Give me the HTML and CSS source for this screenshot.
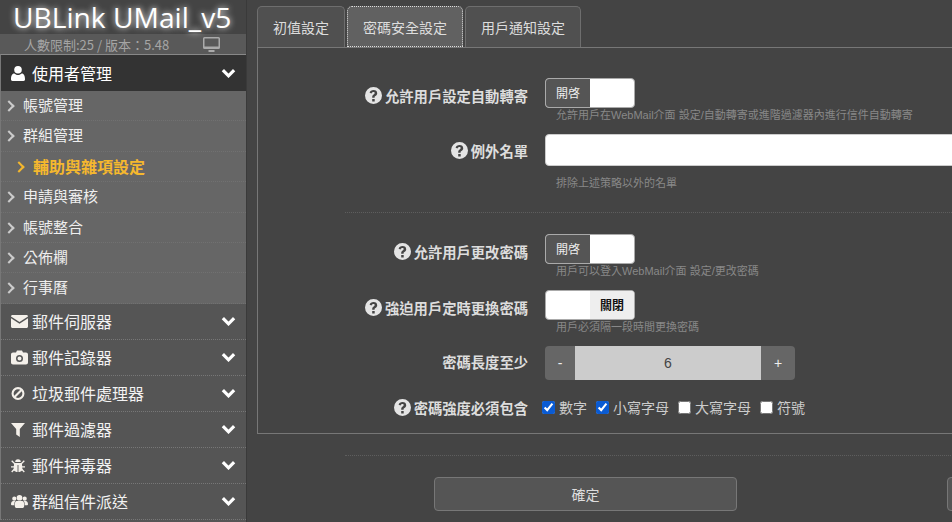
FILE: index.html
```html
<!DOCTYPE html>
<html lang="zh-Hant">
<head>
    <meta charset="UTF-8">
    <title>UBLink UMail_v5</title>
    <link rel="stylesheet" href="styles.css">
</head>
<body>
    <aside class="sidebar">
        <div class="brand">UBLink UMail_v5</div>
        <div class="license">
            <span>人數限制:25 / 版本：5.48</span>
            <svg class="monitor" viewBox="0 0 17 15"><path d="M1.5 0h14A1.5 1.5 0 0 1 17 1.5v9a1.5 1.5 0 0 1-1.5 1.500h-14A1.500 1.500 0 0 1 0 10.500v-9A1.500 1.500 0 0 1 1.500 0zM1.500 1.500v8h14v-8zM5.500 13h6v2h-6z" fill="#aaa" fill-rule="evenodd"/></svg>
        </div>
        <div class="menu">
            <div class="menu-head open">
                <svg class="menu-icon" viewBox="0 0 14 15"><circle cx="7" cy="3.800" r="3.800" fill="#fff"/><path d="M1.500 15C.500 15 0 14.400 0 13.300 0 10 1 7.500 3.300 7.500 4.300 8.400 5.500 9 7 9s2.700-.6 3.700-1.500C13 7.500 14 10 14 13.300c0 1.100-.5 1.700-1.500 1.700z" fill="#fff"/></svg>
                <span class="menu-text">使用者管理</span>
                <svg class="chev" viewBox="0 0 16 10"><path d="M2 2l6 6 6-6" fill="none" stroke="#fff" stroke-width="3.400"/></svg>
            </div>
            <ul class="submenu">
                <li><span class="arrow"></span>帳號管理</li>
                <li><span class="arrow"></span>群組管理</li>
                <li class="current"><span class="arrow"></span>輔助與雜項設定</li>
                <li><span class="arrow"></span>申請與審核</li>
                <li><span class="arrow"></span>帳號整合</li>
                <li><span class="arrow"></span>公佈欄</li>
                <li><span class="arrow"></span>行事曆</li>
            </ul>
            <div class="menu-head">
                <svg class="menu-icon wide" viewBox="0 0 17 13"><path d="M1.500 0h14c.8 0 1.500.6 1.500 1.400L8.500 7 0 1.400C0 .6.700 0 1.500 0zM0 3.200l8.500 5.600L17 3.200v8.300c0 .8-.7 1.500-1.500 1.500h-14C.7 13 0 12.300 0 11.500z" fill="#f4f0ea"/></svg>
                <span class="menu-text">郵件伺服器</span>
                <svg class="chev" viewBox="0 0 16 10"><path d="M2 2l6 6 6-6" fill="none" stroke="#fff" stroke-width="3.400"/></svg>
            </div>
            <div class="menu-head">
                <svg class="menu-icon wide" viewBox="0 0 17 14"><path d="M2 2h3l1-2h5l1 2h3c1.100 0 2 .9 2 2v8c0 1.100-.9 2-2 2H2c-1.100 0-2-.9-2-2V4c0-1.100.9-2 2-2zm6.500 2.500a3.500 3.500 0 1 0 0 7 3.500 3.500 0 0 0 0-7zm0 1.500a2 2 0 1 1 0 4 2 2 0 0 1 0-4z" fill="#f4f0ea" fill-rule="evenodd"/></svg>
                <span class="menu-text">郵件記錄器</span>
                <svg class="chev" viewBox="0 0 16 10"><path d="M2 2l6 6 6-6" fill="none" stroke="#fff" stroke-width="3.400"/></svg>
            </div>
            <div class="menu-head">
                <svg class="menu-icon" viewBox="0 0 16 16"><circle cx="8" cy="8" r="6.200" fill="none" stroke="#f4f0ea" stroke-width="2.400"/><path d="M4 12l8-8" stroke="#f4f0ea" stroke-width="2.400"/></svg>
                <span class="menu-text">垃圾郵件處理器</span>
                <svg class="chev" viewBox="0 0 16 10"><path d="M2 2l6 6 6-6" fill="none" stroke="#fff" stroke-width="3.400"/></svg>
            </div>
            <div class="menu-head">
                <svg class="menu-icon" viewBox="0 0 14 15"><path d="M0 1h14L8.800 7v8L5.200 12.500V7z" fill="#f4f0ea"/></svg>
                <span class="menu-text">郵件過濾器</span>
                <svg class="chev" viewBox="0 0 16 10"><path d="M2 2l6 6 6-6" fill="none" stroke="#fff" stroke-width="3.400"/></svg>
            </div>
            <div class="menu-head">
                <svg class="menu-icon" viewBox="0 0 16 16"><path d="M4.800 4a3.200 3.200 0 0 1 6.400 0zM3.500 5h9L13 13c-1 1.500-3 2.500-4.500 2.500v-8h-1v8C6 15.500 4 14.500 3 13z" fill="#f4f0ea"/><path d="M.8 2.500l3.500 3.500M15.200 2.500L11.700 6M0 9.500h4M16 9.500h-4M.8 15.500l3.200-3.500M15.200 15.500L12 12" stroke="#f4f0ea" stroke-width="1.500"/></svg>
                <span class="menu-text">郵件掃毒器</span>
                <svg class="chev" viewBox="0 0 16 10"><path d="M2 2l6 6 6-6" fill="none" stroke="#fff" stroke-width="3.400"/></svg>
            </div>
            <div class="menu-head">
                <svg class="menu-icon wide" viewBox="0 0 18 14"><circle cx="3.500" cy="4" r="2.200" fill="#f4f0ea"/><circle cx="14.500" cy="4" r="2.200" fill="#f4f0ea"/><circle cx="9" cy="3" r="3" fill="#f4f0ea"/><path d="M0 10c0-2 .8-3.500 2.500-3.500h2C3.500 8 3.500 9.500 3.500 11H1c-.6 0-1-.4-1-1zM18 10c0-2-.8-3.500-2.500-3.500h-2c1 1.500 1 3 1 4.500H17c.6 0 1-.4 1-1zM6 6.500h6c1.500 0 2 2 2 5 0 1.500-1 2.500-2 2.500H6c-1 0-2-1-2-2.500 0-3 .5-5 2-5z" fill="#f4f0ea"/></svg>
                <span class="menu-text">群組信件派送</span>
                <svg class="chev" viewBox="0 0 16 10"><path d="M2 2l6 6 6-6" fill="none" stroke="#fff" stroke-width="3.400"/></svg>
            </div>
        </div>
    </aside>

    <main class="content">
        <div class="tabs">
            <div class="tab">初值設定</div>
            <div class="tab active">密碼安全設定</div>
            <div class="tab">用戶通知設定</div>
        </div>
        <section class="panel">
            <div class="row row-switch">
                <label class="row-label"><svg class="help-icon" viewBox="0 0 17 17"><use href="#q"/></svg>允許用戶設定自動轉寄</label>
                <div class="switch on"><span class="switch-on">開啓</span><span class="switch-blank"></span></div>
            </div>
            <p class="hint">允許用戶在WebMail介面 設定/自動轉寄或進階過濾器內進行信件自動轉寄</p>

            <div class="row row-input">
                <label class="row-label"><svg class="help-icon" viewBox="0 0 17 17"><use href="#q"/></svg>例外名單</label>
                <input class="text-input" type="text">
            </div>
            <p class="hint hint-gap">排除上述策略以外的名單</p>

            <div class="dots dots-panel"></div>

            <div class="row row-switch">
                <label class="row-label"><svg class="help-icon" viewBox="0 0 17 17"><use href="#q"/></svg>允許用戶更改密碼</label>
                <div class="switch on"><span class="switch-on">開啓</span><span class="switch-blank"></span></div>
            </div>
            <p class="hint">用戶可以登入WebMail介面 設定/更改密碼</p>

            <div class="row row-next row-switch">
                <label class="row-label"><svg class="help-icon" viewBox="0 0 17 17"><use href="#q"/></svg>強迫用戶定時更換密碼</label>
                <div class="switch"><span class="switch-blank"></span><span class="switch-off">關閉</span></div>
            </div>
            <p class="hint">用戶必須隔一段時間更換密碼</p>

            <div class="row row-next row-stepper">
                <label class="row-label">密碼長度至少</label>
                <div class="stepper">
                    <span class="step step-minus">-</span>
                    <span class="step-value">6</span>
                    <span class="step step-plus">+</span>
                </div>
            </div>

            <div class="row row-checks">
                <label class="row-label"><svg class="help-icon" viewBox="0 0 17 17"><use href="#q"/></svg>密碼強度必須包含</label>
                <div class="checks">
                    <label class="check"><input type="checkbox" checked>數字</label>
                    <label class="check"><input type="checkbox" checked>小寫字母</label>
                    <label class="check"><input type="checkbox">大寫字母</label>
                    <label class="check"><input type="checkbox">符號</label>
                </div>
            </div>
        </section>
        <div class="dots dots-page"></div>
        <div class="actions">
            <button class="btn btn-ok">確定</button>
            <button class="btn btn-next"></button>
        </div>
    </main>

    <svg class="defs" width="0" height="0">
        <symbol id="q" viewBox="0 0 17 17">
            <path fill="#e4e4e4" fill-rule="evenodd" d="M8.500 0a8.500 8.500 0 1 1 0 17 8.500 8.500 0 0 1 0-17zM7.200 12v2.400h2.500V12zM8.600 3C6.500 3 5.100 4 4.600 5.700l2 .9c.3-1 .9-1.500 1.800-1.500.8 0 1.300.4 1.300 1 0 .5-.3.8-1 1.300-1.200.8-1.500 1.500-1.500 2.800v.6h2.400V10.300c0-.6.200-.8.900-1.300 1.100-.7 1.700-1.500 1.700-2.800C12.200 4.200 10.700 3 8.600 3z"/>
        </symbol>
    </svg>
</body>
</html>
```

FILE: styles.css
```css
html, body {
    margin: 0;
    padding: 0;
    height: 100%;
    overflow: hidden;
}
body {
    display: flex;
    background-color: #444;
    font-family: "Noto Sans CJK TC", "Liberation Sans", sans-serif;
    color: #ddd;
}
.defs {
    position: absolute;
}

/* sidebar */
.sidebar {
    width: 247px;
    flex: none;
    background-color: #555;
    border-right: 1px solid #3a3a3a;
    box-sizing: border-box;
    overflow: hidden;
}
.brand {
    height: 34px;
    line-height: 34px;
    padding-left: 13px;
    background-color: #444;
    color: #fff;
    font-family: "Open Sans", sans-serif;
    font-size: 28.200px;
    white-space: nowrap;
    text-shadow: 0 0 6px #fff;
}
.license {
    height: 20px;
    display: flex;
    align-items: center;
    justify-content: space-between;
    padding: 0 26px 0 24px;
    background-color: #595959;
    color: #a5a5a5;
    font-size: 13px;
    white-space: nowrap;
}
.monitor {
    width: 17px;
    height: 15px;
}
.menu {
    border-top: 1px solid #888;
    border-left: 1px solid #777;
}
.menu-head {
    height: 36px;
    display: flex;
    align-items: center;
    padding-left: 10px;
    padding-right: 10px;
    box-sizing: border-box;
    border-bottom: 1px dotted #777;
    background-color: #555;
    color: #f2f2f2;
    font-size: 16px;
    white-space: nowrap;
}
.menu-head.open {
    background-color: #333;
    color: #fff;
    border-bottom: 0;
}
.menu-icon {
    width: 14px;
    height: 15px;
    margin-right: 7px;
    flex: none;
}
.menu-icon.wide {
    width: 17px;
    margin-right: 4px;
    margin-left: 0;
}
.menu-text {
    flex: 1;
}
.chev {
    width: 15px;
    height: 10px;
    flex: none;
}
.submenu {
    list-style: none;
    margin: 0;
    padding: 0;
    background-color: #666;
    font-size: 15px;
}
.submenu li {
    height: 30.400px;
    line-height: 28px;
    box-sizing: border-box;
    padding-left: 22px;
    position: relative;
    border-bottom: 1px dotted #717171;
    color: #eee;
    white-space: nowrap;
}
.arrow {
    position: absolute;
    left: 4px;
    top: 11px;
    width: 6px;
    height: 6px;
    border-top: 2px solid #ccc;
    border-right: 2px solid #ccc;
    transform: rotate(45deg);
}
.submenu li.current {
    padding-left: 32px;
    color: #f5b82e;
    font-size: 16px;
    font-weight: bold;
}
.current .arrow {
    left: 14px;
    border-color: #f5b82e;
}

/* tabs */
.content {
    flex: 1;
    min-width: 0;
    padding: 6px 0 0 10px;
    overflow: hidden;
}
.tabs {
    display: flex;
    gap: 2px;
    height: 41px;
}
.tab {
    box-sizing: border-box;
    padding: 0 15px;
    line-height: 40px;
    font-size: 14px;
    color: #ddd;
    background-color: #505050;
    border: 1px solid #6e6e6e;
    border-bottom: 0;
    border-radius: 5px 5px 0 0;
    white-space: nowrap;
}
.tab.active {
    background-color: #616161;
    border: 1px dotted #ddd;
    padding: 0 15px;
}

/* form */
.panel {
    width: 900px;
    box-sizing: border-box;
    padding: 30px 0 16px;
    border: 1px solid #777;
    background-color: #444;
}
.row {
    display: flex;
    align-items: center;
    gap: 17px;
}
.row-label {
    width: 270px;
    flex: none;
    display: flex;
    justify-content: flex-end;
    align-items: center;
    font-size: 14.300px;
    font-weight: bold;
    color: #ddd;
    white-space: nowrap;
}
.row-switch .row-label {
    padding-top: 4px;
}
.row-stepper .row-label {
    padding-bottom: 3px;
}
.help-icon {
    width: 17px;
    height: 17px;
    margin-right: 3px;
}
.hint {
    margin: 0 0 0 298px;
    height: 15px;
    line-height: 15px;
    font-family: "Liberation Sans", "Noto Sans CJK TC", sans-serif;
    font-size: 11px;
    color: #888;
    white-space: nowrap;
}
.hint-gap {
    margin-top: 10px;
}
.row-input {
    margin-top: 11px;
}
.row-next {
    margin-top: 11px;
}
.row-checks {
    margin-top: 17px;
    height: 20px;
}
.switch {
    width: 90px;
    height: 30px;
    display: flex;
    box-sizing: border-box;
    border: 1px solid #aaa;
    border-radius: 4px;
    overflow: hidden;
    font-size: 12px;
    background-color: #fff;
}
.switch-on, .switch-off {
    width: 44px;
    text-align: center;
    line-height: 28px;
}
.switch-on {
    background-color: #555;
    color: #eee;
}
.switch-off {
    background-color: #eee;
    color: #111;
    font-weight: bold;
}
.switch-blank {
    flex: 1;
}
.text-input {
    flex: none;
    width: 600px;
    height: 32px;
    box-sizing: border-box;
    border: 1px solid #ccc;
    border-radius: 4px;
    background-color: #fff;
}
.dots {
    border-top: 1px dotted #5e5e5e;
}
.dots-panel {
    margin: 21px 0 21px 87px;
}
.stepper {
    width: 250px;
    height: 34px;
    display: flex;
    border-radius: 4px;
    overflow: hidden;
    font-family: "Liberation Sans", sans-serif;
    font-size: 14px;
}
.step {
    background-color: #666;
    color: #eee;
    text-align: center;
    line-height: 34px;
}
.step-minus {
    width: 30px;
}
.step-plus {
    width: 34px;
}
.step-value {
    flex: 1;
    background-color: #ccc;
    color: #444;
    text-align: center;
    line-height: 34px;
}
.checks {
    display: flex;
    gap: 8px;
    margin-left: -3px;
}
.check {
    display: flex;
    align-items: center;
    font-size: 14px;
    color: #ccc;
    white-space: nowrap;
}
.check input {
    width: 13px;
    height: 13px;
    margin: 0 4px 0 1px;
    accent-color: #0a5bd3;
}
.check:first-child input {
    margin-left: 0;
}

/* bottom buttons */
.dots-page {
    width: 700px;
    margin: 21px 0 0 88px;
}
.actions {
    display: flex;
    gap: 210px;
    margin: 21px 0 0 177px;
}
.btn {
    width: 303px;
    height: 34px;
    flex: none;
    background-color: #555;
    border: 1px solid #777;
    border-radius: 4px;
    color: #ddd;
    font-family: inherit;
    font-size: 14px;
}
```
